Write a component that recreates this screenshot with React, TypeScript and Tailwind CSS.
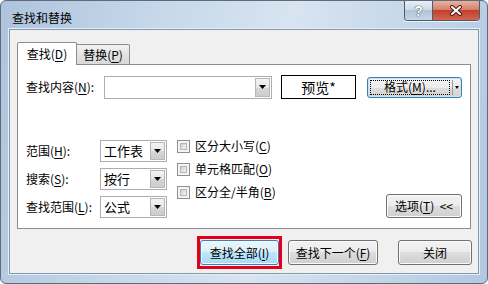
import React from "react";

const U = ({ c }: { c: string }) => (
  <span className="underline underline-offset-[2px] decoration-1">{c}</span>
);

const Tri = () => (
  <svg width="7" height="4" viewBox="0 0 7 4">
    <path d="M0 0h7L3.5 4z" fill="#000" />
  </svg>
);

const DropBtn = () => (
  <div className="w-[15px] m-px flex items-center justify-center border border-[#b6b6b6] bg-[linear-gradient(180deg,#f3f3f3_0%,#e6e6e6_50%,#d6d6d6_50%,#cdcdcd_100%)]">
    <Tri />
  </div>
);

const Combo = ({ className, text }: { className: string; text?: string }) => (
  <div className={"flex border border-[#abadb3] bg-white " + className}>
    <div className="flex-1 flex items-center pl-[3px] text-[13px] whitespace-nowrap overflow-hidden">{text}</div>
    <DropBtn />
  </div>
);

const CheckRow = ({ children }: { children: React.ReactNode }) => (
  <div className="flex items-center h-[16px]">
    <div className="w-[13px] h-[13px] border border-[#8e8f8f] bg-[#f4f4f4] p-[2px]">
      <div className="w-full h-full border border-[#b4b8be] bg-[linear-gradient(135deg,#c9cdd3_0%,#e4e6e9_60%,#f5f5f5_100%)]" />
    </div>
    <div className="ml-[5px]">{children}</div>
  </div>
);

const normalBtn =
  "flex items-center justify-center rounded-[3px] border border-[#707070] shadow-[inset_0_0_0_1px_#fbfbfb] bg-[linear-gradient(180deg,#f2f2f2_0%,#ebebeb_50%,#dddddd_50%,#cfcfcf_100%)]";

export default function App() {
  return (
    <div className="w-[488px] h-[284px] overflow-hidden rounded-[6px] border border-[#5d6b7c] bg-[linear-gradient(100deg,#aec4dc_0%,#c6d8ea_30%,#d8e4f0_55%,#c3d5e8_80%,#b2c8df_100%)] text-[12px] text-black font-['Noto_Sans_CJK_SC',sans-serif] leading-[16px] relative">
      {/* title bar */}
      <div className="h-[28px] flex items-center pl-[11px] pt-[5px] text-[12px]">查找和替换</div>
      {/* caption buttons */}
      <div className="absolute top-0 right-[7px] flex h-[20px] rounded-b-[4px] overflow-hidden border border-t-0 border-[#4d5b6e] shadow-[0_1px_0_#e8eff7]">
        <div className="w-[28px] h-full flex items-center justify-center border-r border-[#4d5b6e] bg-[linear-gradient(180deg,#e8eef5_0%,#cfdae6_45%,#b3c3d6_50%,#c7d5e4_100%)] text-white font-bold text-[14px] font-['Liberation_Sans',sans-serif] [text-shadow:0_0_1px_#2a3a4e,0_0_1px_#2a3a4e]">
          ?
        </div>
        <div className="w-[46px] h-full flex items-center justify-center bg-[linear-gradient(180deg,#eab0a2_0%,#d7806d_45%,#c2412e_50%,#d1654f_100%)]">
          <svg width="14" height="11" viewBox="0 0 14 11">
            <path d="M3 2L11 9M11 2L3 9" stroke="#4a1b16" strokeWidth="4" strokeLinecap="round" />
            <path d="M3 2L11 9M11 2L3 9" stroke="#fff" strokeWidth="2" strokeLinecap="round" />
          </svg>
        </div>
      </div>
      {/* client */}
      <div className="ml-[8px] w-[470px] h-[245px] bg-[#f0f0f0] border border-[#8397ae] shadow-[0_0_0_1px_#e6eef7] flex flex-col">
        {/* tabs */}
        <div className="flex items-end mt-[12px] ml-[7px] -mb-px relative z-10">
          <div className="w-[60px] h-[23px] bg-white border border-b-0 border-[#898c95] rounded-t-[2px] flex items-center justify-center">
            查找(<U c="D" />)
          </div>
          <div className="w-[53px] h-[21px] border border-l-0 border-[#898c95] rounded-tr-[2px] bg-[linear-gradient(180deg,#f2f2f2_0%,#e3e3e3_50%,#d9d9d9_100%)] flex items-center justify-center">
            替换(<U c="P" />)
          </div>
        </div>
        {/* panel */}
        <div className="ml-[7px] w-[454px] h-[165px] bg-white border border-[#898c95] flex flex-col">
          <div className="flex items-center mt-[10px] pl-[8px] h-[24px]">
            <div className="w-[78px]">
              查找内容(<U c="N" />):
            </div>
            <Combo className="w-[168px] h-[23px]" />
            <div className="ml-[9px] w-[75px] h-[24px] border border-black bg-white flex items-center justify-center text-[14px]">
              预览*
            </div>
            <div className="ml-[11px] w-[95px] h-[21px] flex rounded-[3px] border border-[#3c7fb1] shadow-[inset_0_0_0_1px_#c4e5f6] bg-[linear-gradient(180deg,#f4f4f4_0%,#ececec_50%,#dedede_50%,#d3d3d3_100%)]">
              <div className="flex-1 p-[2px] flex">
                <div className="flex-1 border border-dotted border-black flex items-center justify-center">
                  格式(<U c="M" />)...
                </div>
              </div>
              <div className="w-px my-[2px] bg-[#9a9a9a]" />
              <div className="w-[8px] flex items-center justify-center">
                <svg width="4" height="3" viewBox="0 0 4 3">
                  <path d="M0 0h4L2 3z" fill="#000" />
                </svg>
              </div>
            </div>
          </div>
          <div className="flex mt-[39px] pl-[8px] pr-[8px] h-[80px]">
            <div className="flex flex-col gap-[6px] pt-[2px]">
              <div className="flex items-center h-[22px]">
                <div className="w-[74px]">
                  范围(<U c="H" />):
                </div>
                <Combo className="w-[67px] h-[22px]" text="工作表" />
              </div>
              <div className="flex items-center h-[22px]">
                <div className="w-[74px]">
                  搜索(<U c="S" />):
                </div>
                <Combo className="w-[67px] h-[22px]" text="按行" />
              </div>
              <div className="flex items-center h-[22px]">
                <div className="w-[74px]">
                  查找范围(<U c="L" />):
                </div>
                <Combo className="w-[67px] h-[22px]" text="公式" />
              </div>
            </div>
            <div className="flex flex-col gap-[7px] ml-[10px]">
              <CheckRow>
                区分大小写(<U c="C" />)
              </CheckRow>
              <CheckRow>
                单元格匹配(<U c="O" />)
              </CheckRow>
              <CheckRow>
                区分全/半角(<U c="B" />)
              </CheckRow>
            </div>
            <div className={"ml-auto self-end w-[76px] h-[24px] " + normalBtn}>
              选项(<U c="T" />)&nbsp;&nbsp;&lt;&lt;
            </div>
          </div>
        </div>
        {/* buttons */}
        <div className="flex items-center justify-end mt-[7px] pr-[6px]">
          <div className="border-[3px] border-[#e4001b] py-px">
            <div className="w-[79px] h-[25px] flex items-center justify-center rounded-[3px] border border-[#3c7fb1] shadow-[inset_0_0_0_1px_#f0f9fe] bg-[linear-gradient(180deg,#eaf6fd_0%,#d9f0fc_50%,#bee6fd_50%,#a7d9f5_100%)]">
              查找全部(<U c="I" />)
            </div>
          </div>
          <div className={"ml-[6px] w-[90px] h-[25px] " + normalBtn}>
            查找下一个(<U c="F" />)
          </div>
          <div className={"ml-[20px] w-[74px] h-[25px] " + normalBtn}>关闭</div>
        </div>
      </div>
    </div>
  );
}
